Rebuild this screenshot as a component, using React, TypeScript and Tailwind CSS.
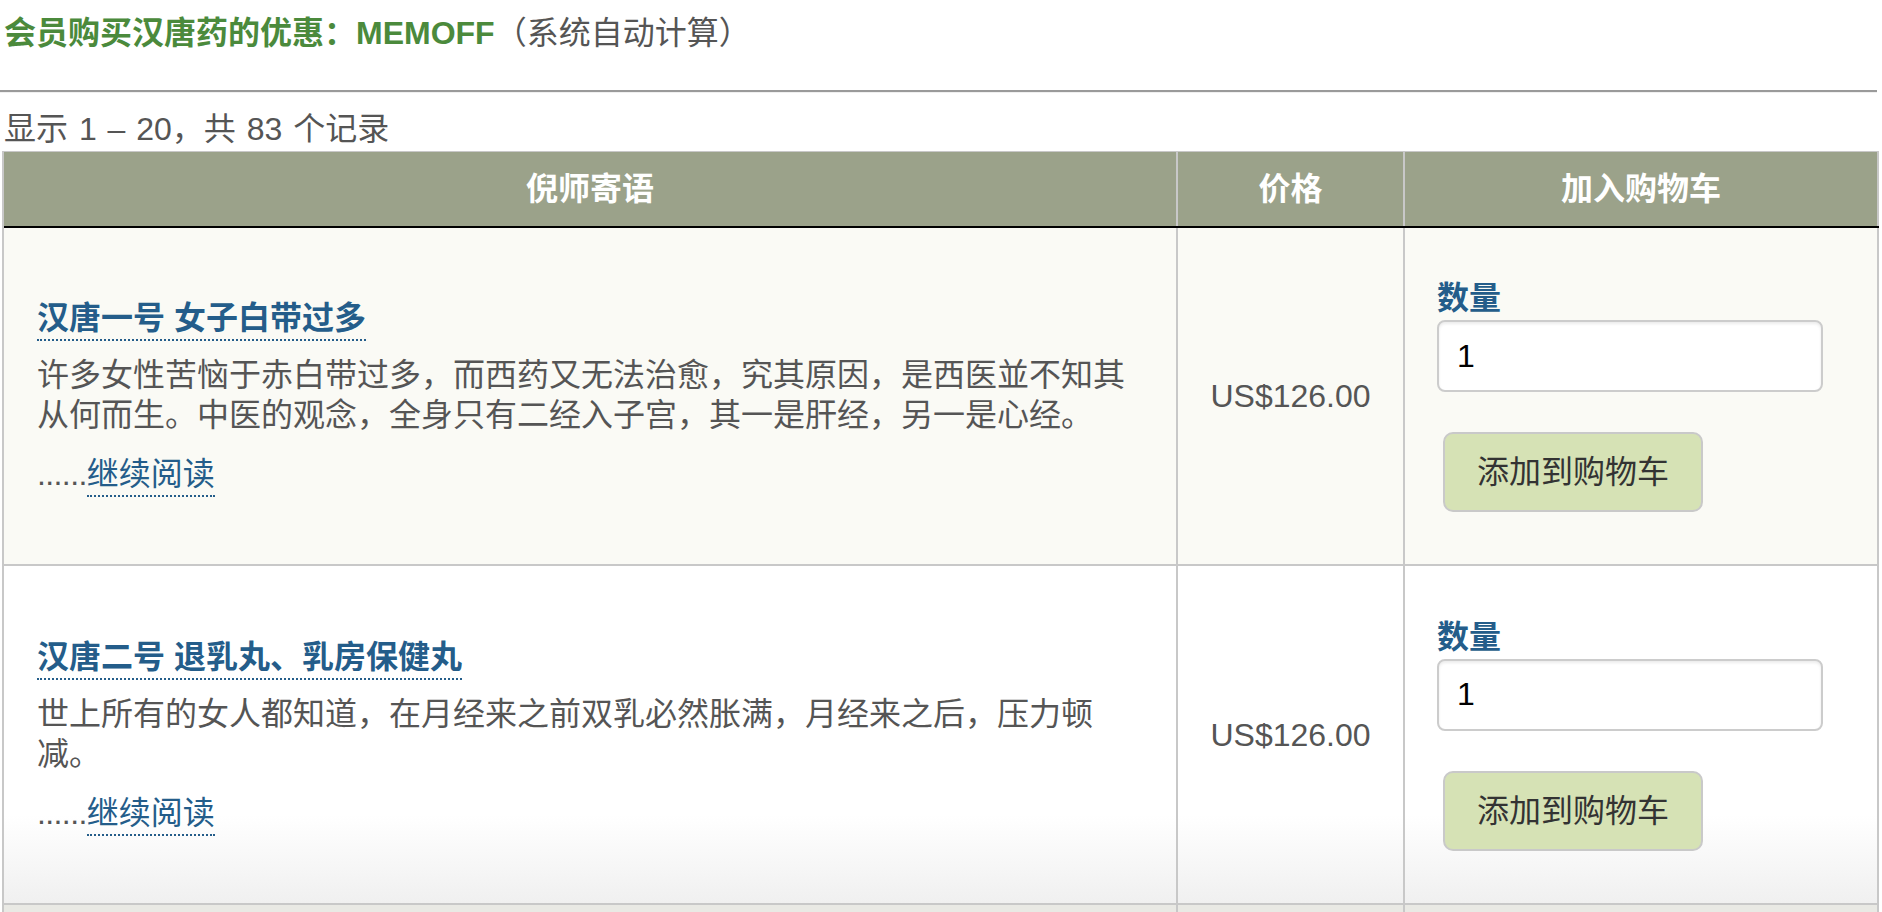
import React from 'react'

const ROWS = [
  {
    title: '汉唐一号 女子白带过多',
    desc: '许多女性苦恼于赤白带过多，而西药又无法治愈，究其原因，是西医並不知其从何而生。中医的观念，全身只有二经入子宫，其一是肝经，另一是心经。',
    price: 'US$126.00',
    bg: 'bg-[#fafaf5]',
    h: 'h-[336px]',
  },
  {
    title: '汉唐二号 退乳丸、乳房保健丸',
    desc: '世上所有的女人都知道，在月经来之前双乳必然胀满，月经来之后，压力顿减。',
    price: 'US$126.00',
    bg: 'bg-[linear-gradient(to_bottom,#ffffff_0%,#ffffff_74%,#f0f0f0_100%)]',
    h: 'h-[337px]',
  },
]

export default function App() {
  return (
    <div className="w-[1882px] h-[912px] overflow-hidden bg-white font-['Liberation_Sans','Noto_Sans_CJK_SC',sans-serif] text-[#555]">
      <div className="pl-[4px] pt-[13px] text-[32px] leading-[40px]">
        <span className="font-bold text-[#4b8a3c]">会员购买汉唐药的优惠：MEMOFF</span>
        <span>（系统自动计算）</span>
      </div>

      <div className="mt-[37px] w-[1877px] border-t-2 border-b border-t-[#9a9a9a] border-b-[#f0f0f0]" />

      <div className="mt-[18px] pl-[4px] text-[32px] leading-[36px] [word-spacing:2px]">显示 1 – 20，共 83 个记录</div>

      <div className="mt-[4px] ml-[2px] w-[1877px] border-l-2 border-t border-[#c8c8c8]">
        <div className="grid grid-cols-[1174px_227px_474px] bg-[#9ba28a] border-b-2 border-black text-[32px] font-bold text-white">
          <div className="h-[74px] flex items-center justify-center border-r-2 border-[#c8c8c8]">倪师寄语</div>
          <div className="h-[74px] flex items-center justify-center border-r-2 border-[#c8c8c8]">价格</div>
          <div className="h-[74px] flex items-center justify-center border-r-2 border-[#c8c8c8]">加入购物车</div>
        </div>

        {ROWS.map((row, i) => (
          <div key={i} className={`grid grid-cols-[1174px_227px_474px] border-b-2 border-[#c8c8c8] ${row.bg}`}>
            <div className={`${row.h} flex flex-col justify-center px-[33px] border-r-2 border-[#c8c8c8] text-[32px]`}>
              <div className="leading-[40px]">
                <a className="font-bold text-[#245d8a] pb-[3px] border-b-2 border-dotted border-[#245d8a]">{row.title}</a>
              </div>
              <p className="mt-[17px] leading-[40px]">{row.desc}</p>
              <div className="mt-[19px] leading-[40px]">
                <span className="tracking-[-0.6px]">......</span>
                <a className="text-[#245d8a] pb-[3px] border-b-2 border-dotted border-[#245d8a]">继续阅读</a>
              </div>
            </div>
            <div className="flex items-center justify-center border-r-2 border-[#c8c8c8] text-[32px]">{row.price}</div>
            <div className="flex flex-col justify-center items-start pl-[32px] border-r-2 border-[#c8c8c8]">
              <label className="text-[32px] leading-[36px] font-bold text-[#245d8a]">数量</label>
              <input
                defaultValue="1"
                className="mt-[4px] w-[386px] h-[72px] px-[18px] text-[32px] text-black bg-white border-2 border-[#cccccc] rounded-[8px] shadow-[inset_0_2px_3px_rgba(0,0,0,0.08)] outline-none"
              />
              <button className="mt-[40px] ml-[6px] w-[260px] h-[80px] bg-[#d6e2b5] border-2 border-[#c9c9c9] rounded-[10px] text-[32px] text-[#333]">
                添加到购物车
              </button>
            </div>
          </div>
        ))}

        <div className="grid grid-cols-[1174px_227px_474px] bg-[#e9e9e4]">
          <div className="h-[40px] border-r-2 border-[#c8c8c8]" />
          <div className="h-[40px] border-r-2 border-[#c8c8c8]" />
          <div className="h-[40px] border-r-2 border-[#c8c8c8]" />
        </div>
      </div>
    </div>
  )
}
